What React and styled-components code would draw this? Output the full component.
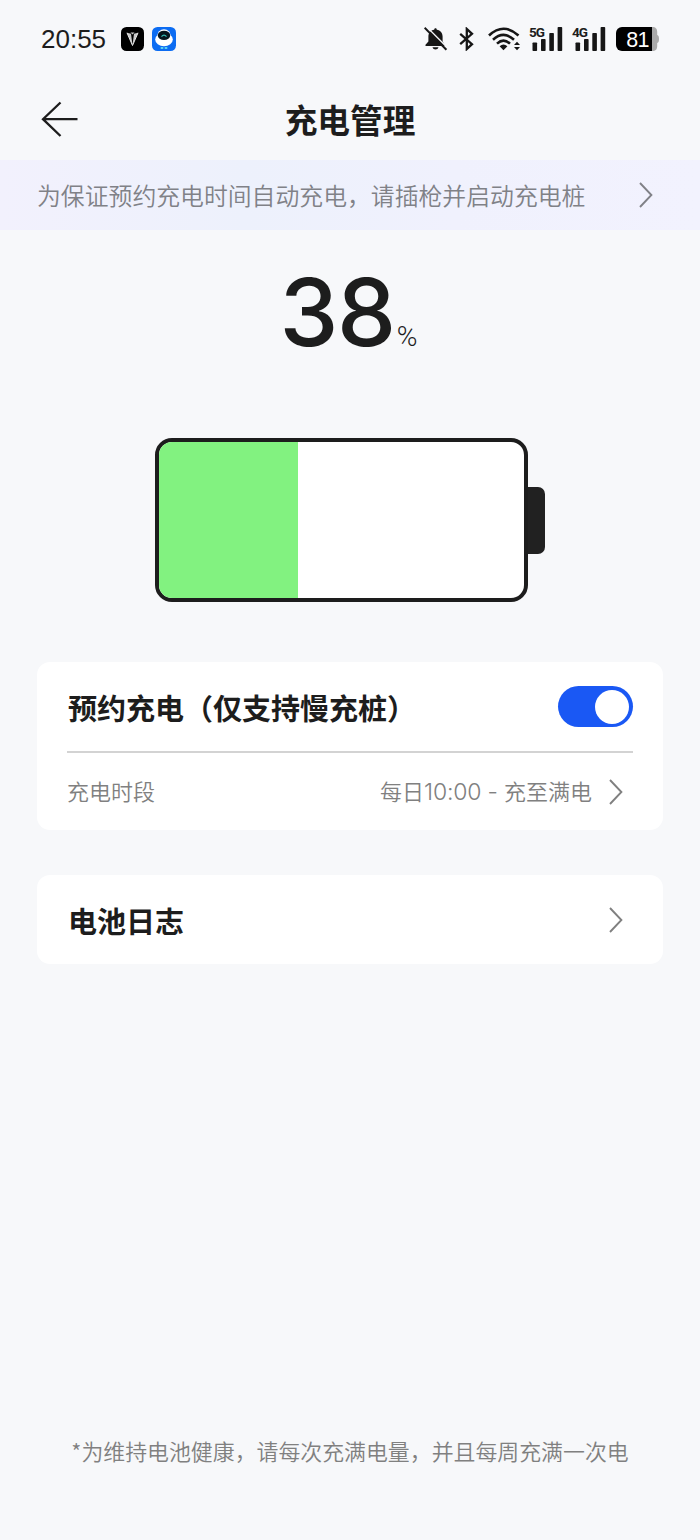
import React, { useState } from "react";
import styled, { createGlobalStyle } from "styled-components";

const GlobalStyle = createGlobalStyle`
  * {
    box-sizing: border-box;
  }
  body {
    margin: 0;
    background-color: #f7f8fa;
    color: #1d1d1d;
    font-family: "Noto Sans CJK SC", sans-serif;
  }
`;

const Page = styled.div`
  display: flex;
  flex-direction: column;
  width: 700px;
  height: 1540px;
  overflow: hidden;
  background-color: #f7f8fa;
`;

const StatusBar = styled.div`
  display: flex;
  justify-content: space-between;
  align-items: center;
  height: 78px;
  padding: 0 41px 0 41px;
  svg {
    display: block;
    flex: none;
  }
`;
const StatusGroup = styled.div`
  display: flex;
  align-items: center;
`;
const Time = styled.div`
  width: 80px;
  font-family: "Liberation Sans", sans-serif;
  font-size: 26px;
  line-height: 30px;
`;
const AppBadge = styled.div`
  margin-right: 8px;
`;
const StatusIcon = styled.div`
  margin-left: ${(props) => props.$gap}px;
`;
const Signal = styled.div`
  position: relative;
  width: 34px;
  height: 26px;
  margin-left: ${(props) => props.$gap}px;
`;
const SignalLabel = styled.span`
  position: absolute;
  top: 0;
  left: 0;
  font-family: Roboto, sans-serif;
  font-size: 13.5px;
  line-height: 12px;
  font-weight: 700;
  letter-spacing: -1.1px;
`;
const Charge = styled.div`
  display: flex;
  align-items: center;
  margin-left: 10px;
`;
const ChargeLevel = styled.div`
  width: 36px;
  height: 24px;
  padding-left: 7px;
  border-radius: 6px 0 0 6px;
  background-color: #000;
  color: #fff;
  font-family: "Liberation Sans", sans-serif;
  font-size: 21.5px;
  line-height: 26px;
  text-align: center;
  letter-spacing: -0.8px;
`;

const Header = styled.div`
  display: grid;
  grid-template-columns: 80px 1fr 80px;
  align-items: center;
  height: 82px;
  padding: 0 40px;
`;
const BackButton = styled.div`
  cursor: pointer;
  svg {
    display: block;
  }
`;
const Title = styled.div`
  text-align: center;
  font-size: 32.7px;
  line-height: 48px;
  font-weight: 700;
`;

const Notice = styled.div`
  display: flex;
  justify-content: space-between;
  align-items: center;
  height: 70px;
  padding: 0 47px 0 37px;
  background: linear-gradient(90deg, #f2f1fd 0%, #edf1fc 35%, #f0f1fd 65%, #f2f2fe 100%);
  color: #808187;
  white-space: nowrap;
`;
const NoticeText = styled.div`
  padding-bottom: 1px;
  font-size: 23.85px;
  font-weight: 350;
`;

const Percentage = styled.div`
  display: flex;
  justify-content: center;
  align-items: baseline;
  height: 208px;
  padding: 25px 3px 0 0;
`;
const PercentValue = styled.div`
  font-family: Inter, sans-serif;
  font-size: 94px;
  line-height: 114px;
  font-weight: 500;
  letter-spacing: -1.5px;
`;
const PercentSign = styled.div`
  margin-left: 2px;
  font-family: Roboto, sans-serif;
  font-size: 28px;
  font-weight: 300;
`;

const Battery = styled.div`
  display: flex;
  align-items: center;
  margin-left: 155px;
`;
const BatteryBody = styled.div`
  width: 373px;
  height: 164px;
  overflow: hidden;
  border: 4px solid #1d1d1d;
  border-radius: 17px;
  background-color: #fff;
`;
const BatteryFill = styled.div`
  height: 100%;
  background-color: #82f280;
`;
const BatteryCap = styled.div`
  width: 17px;
  height: 67px;
  border-radius: 0 7px 7px 0;
  background-color: #212121;
`;

const Card = styled.div`
  margin: ${(props) => props.$top}px 37px 0;
  padding: 0 30px;
  border-radius: 13px;
  background-color: #fff;
`;
const CardRow = styled.div`
  display: flex;
  justify-content: space-between;
  align-items: center;
  height: ${(props) => props.$height}px;
  border-bottom: ${(props) => (props.$divider ? "2px solid #d3d3d3" : "none")};
`;
const CardTitle = styled.div`
  padding-left: 1px;
  font-size: 29px;
  line-height: 42px;
  font-weight: 700;
`;
const RowLabel = styled.div`
  padding-bottom: 3px;
  color: #808080;
  font-size: 22px;
  line-height: 32px;
  font-weight: 350;
`;
const RowValue = styled.div`
  display: flex;
  align-items: center;
  gap: 17px;
  padding-right: 10px;
  color: #808080;
  font-size: 22px;
  line-height: 32px;
  font-weight: 350;
`;
const ValueText = styled.div`
  padding-bottom: 2px;
`;
const Digits = styled.span`
  font-family: Inter, sans-serif;
  font-size: 23px;
  font-weight: 300;
  letter-spacing: -0.2px;
`;

const Toggle = styled.div`
  display: flex;
  justify-content: ${(props) => (props.$on ? "flex-end" : "flex-start")};
  align-items: center;
  width: 75px;
  height: 41px;
  padding: 0 4px;
  border-radius: 21px;
  background-color: ${(props) => (props.$on ? "#1a58f4" : "#d3d3d3")};
  cursor: pointer;
`;
const Knob = styled.div`
  width: 34px;
  height: 34px;
  border-radius: 50%;
  background-color: #fff;
`;

const Footnote = styled.div`
  margin-top: auto;
  padding-bottom: 73px;
  text-align: center;
  color: #808080;
  font-size: 21.9px;
  line-height: 32px;
  font-weight: 350;
`;

const Chevron = ({ color = "#808080" }) => (
  <svg width="14" height="26" viewBox="0 0 14 26" fill="none">
    <path d="M1 1 L12.4 13 L1 25" stroke={color} strokeWidth="1.9" />
  </svg>
);

const SignalBars = () => (
  <svg width="34" height="26" viewBox="0 0 34 26" fill="#161616">
    <rect x="3.5" y="16.5" width="4.6" height="8.5" rx="0.8" />
    <rect x="12" y="13" width="4.6" height="12" rx="0.8" />
    <rect x="20.3" y="7" width="4.6" height="18" rx="0.8" />
    <rect x="28.6" y="1" width="4.6" height="24" rx="0.8" />
  </svg>
);

const App = () => {
  const [scheduled, setScheduled] = useState(true);
  const level = 38;

  return (
    <>
      <GlobalStyle />
      <Page>
        <StatusBar>
          <StatusGroup>
            <Time>20:55</Time>
            <AppBadge>
              <svg width="23" height="24" viewBox="0 0 23 24">
                <rect width="23" height="24" rx="5.5" fill="#000" />
                <path
                  d="M6 5.8 L10 6.8 L11.5 18 Z M17 5.8 L13 6.8 L11.5 18 Z M9.5 5.5 H13.5 L11.5 7.5 Z"
                  fill="#c9c9c9"
                />
                <path d="M6 5.8 L11.5 18.5 L17 5.8" fill="none" stroke="#eee" strokeWidth="1" />
              </svg>
            </AppBadge>
            <AppBadge>
              <svg width="24" height="24" viewBox="0 0 24 24">
                <rect width="24" height="24" rx="5.5" fill="#0c6cf2" />
                <ellipse cx="12" cy="12.5" rx="8.8" ry="6.8" fill="#fff" />
                <circle cx="12" cy="9" r="6.8" fill="#fff" />
                <ellipse cx="12" cy="8.4" rx="6.2" ry="4.7" fill="#06151f" />
                <path d="M9.5 9.6 Q12 6.5 14.5 9.6" fill="none" stroke="#36b9b4" strokeWidth="1.2" />
                <path d="M9.5 21 H10.5 M13.5 21 H14.5" stroke="#5fd5ef" strokeWidth="2" strokeLinecap="round" />
              </svg>
            </AppBadge>
          </StatusGroup>
          <StatusGroup>
            <StatusIcon $gap={0}>
              <svg width="24" height="24" viewBox="0 0 24 24">
                <path
                  d="M11.5 1.2 C12.4 1.2 12.8 1.8 12.8 2.7 C16.5 3.4 18.6 6 18.6 9.5 V14.5 L20.8 17.8 V19 H1.5 V17.8 L4.4 14.5 V9.5 C4.4 6 6.5 3.4 10.2 2.7 C10.2 1.8 10.6 1.2 11.5 1.2 Z M8.5 20.3 H14.5 C14 21.8 12.9 22.5 11.5 22.5 C10.1 22.5 9 21.8 8.5 20.3 Z"
                  fill="#161616"
                />
                <path d="M2.4 -0.4 L24 21.3" stroke="#f7f8fa" strokeWidth="1.4" />
                <path d="M0.6 0.8 L22.4 22.8" stroke="#161616" strokeWidth="2" />
              </svg>
            </StatusIcon>
            <StatusIcon $gap={11}>
              <svg width="16" height="24" viewBox="0 0 16 24" fill="none">
                <path
                  d="M1.2 6.8 L13 17.2 L7.8 22 V2 L13 6.8 L1.2 17.2"
                  stroke="#161616"
                  strokeWidth="2.3"
                />
              </svg>
            </StatusIcon>
            <StatusIcon $gap={13}>
              <svg width="33" height="24" viewBox="0 0 33 24" fill="none">
                <path d="M1 8.5 Q15.5 -5 30.5 8.5" stroke="#161616" strokeWidth="2.6" />
                <path d="M5 12.7 Q15.5 3.2 26 12.7" stroke="#161616" strokeWidth="2.6" />
                <path d="M9 16.6 Q15.5 10.8 22 16.6" stroke="#161616" strokeWidth="2.6" />
                <path d="M11.6 19.2 Q15.5 16 19.4 19.2 L15.5 23.3 Z" fill="#161616" />
                <path d="M26 18 L29 14.8 L32 18 Z M26 20 L29 23.2 L32 20 Z" fill="#161616" />
              </svg>
            </StatusIcon>
            <Signal $gap={8}>
              <SignalLabel>5G</SignalLabel>
              <SignalBars />
            </Signal>
            <Signal $gap={9}>
              <SignalLabel>4G</SignalLabel>
              <SignalBars />
            </Signal>
            <Charge>
              <ChargeLevel>81</ChargeLevel>
              <svg width="7" height="24" viewBox="0 0 7 24">
                <path d="M0 0 C4 0 5.2 2 5.2 5 V8 C6.6 8.4 7 9.5 7 12 C7 14.5 6.6 15.6 5.2 16 V19 C5.2 22 4 24 0 24 Z" fill="#aaa" />
              </svg>
            </Charge>
          </StatusGroup>
        </StatusBar>

        <Header>
          <BackButton>
            <svg width="38" height="36" viewBox="0 0 38 36" fill="none">
              <path d="M20.5 1.5 L3 18.2 L20.5 35 M3 18.2 H37.5" stroke="#1d1d1d" strokeWidth="2.3" />
            </svg>
          </BackButton>
          <Title>充电管理</Title>
        </Header>

        <Notice>
          <NoticeText>为保证预约充电时间自动充电，请插枪并启动充电桩</NoticeText>
          <Chevron color="#808187" />
        </Notice>

        <Percentage>
          <PercentValue>{level}</PercentValue>
          <PercentSign>%</PercentSign>
        </Percentage>

        <Battery>
          <BatteryBody>
            <BatteryFill style={{ width: `${level}%` }} />
          </BatteryBody>
          <BatteryCap />
        </Battery>

        <Card $top={60}>
          <CardRow $height={91} $divider>
            <CardTitle>预约充电（仅支持慢充桩）</CardTitle>
            <Toggle $on={scheduled} onClick={() => setScheduled(!scheduled)}>
              <Knob />
            </Toggle>
          </CardRow>
          <CardRow $height={77}>
            <RowLabel>充电时段</RowLabel>
            <RowValue>
              <ValueText>
                每日<Digits>10:00 - </Digits>充至满电
              </ValueText>
              <Chevron />
            </RowValue>
          </CardRow>
        </Card>

        <Card $top={45}>
          <CardRow $height={89}>
            <CardTitle>电池日志</CardTitle>
            <RowValue>
              <Chevron />
            </RowValue>
          </CardRow>
        </Card>

        <Footnote>*为维持电池健康，请每次充满电量，并且每周充满一次电</Footnote>
      </Page>
    </>
  );
};

export default App;
